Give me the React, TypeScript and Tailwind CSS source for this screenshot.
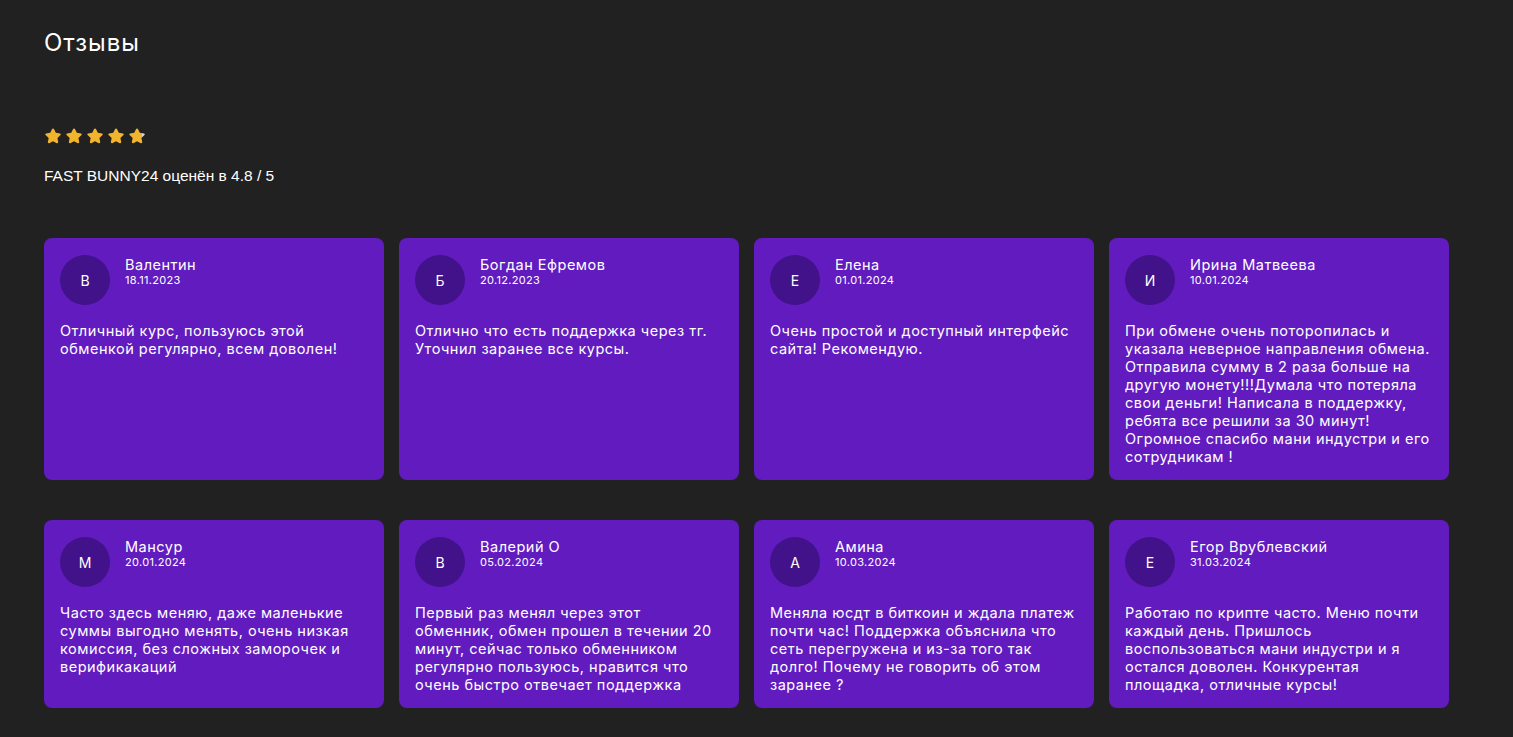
import React from "react";

type Review = {
  name: string;
  date: string;
  text: string;
};

const reviews: Review[] = [
  { name: "Валентин", date: "18.11.2023", text: "Отличный курс, пользуюсь этой обменкой регулярно, всем доволен!" },
  { name: "Богдан Ефремов", date: "20.12.2023", text: "Отлично что есть поддержка через тг. Уточнил заранее все курсы." },
  { name: "Елена", date: "01.01.2024", text: "Очень простой и доступный интерфейс сайта! Рекомендую." },
  {
    name: "Ирина Матвеева",
    date: "10.01.2024",
    text: "При обмене очень поторопилась и указала неверное направления обмена. Отправила сумму в 2 раза больше на другую монету!!!Думала что потеряла свои деньги! Написала в поддержку, ребята все решили за 30 минут! Огромное спасибо мани индустри и его сотрудникам !",
  },
  { name: "Мансур", date: "20.01.2024", text: "Часто здесь меняю, даже маленькие суммы выгодно менять, очень низкая комиссия, без сложных заморочек и верификакаций" },
  {
    name: "Валерий О",
    date: "05.02.2024",
    text: "Первый раз менял через этот обменник, обмен прошел в течении 20 минут, сейчас только обменником регулярно пользуюсь, нравится что очень быстро отвечает поддержка",
  },
  { name: "Амина", date: "10.03.2024", text: "Меняла юсдт в биткоин и ждала платеж почти час! Поддержка объяснила что сеть перегружена и из-за того так долго! Почему не говорить об этом заранее ?" },
  { name: "Егор Врублевский", date: "31.03.2024", text: "Работаю по крипте часто. Меню почти каждый день. Пришлось воспользоваться мани индустри и я остался доволен. Конкурентая площадка, отличные курсы!" },
];

const STAR = "M10 1.6c.5 0 .9.3 1.1.7l2 4.2 4.6.6c.9.1 1.3 1.3.6 1.9l-3.4 3.2.9 4.6c.2.9-.8 1.6-1.6 1.2L10 15.8 5.9 18c-.8.4-1.8-.3-1.6-1.2l.9-4.6-3.4-3.2c-.7-.6-.3-1.8.6-1.9l4.6-.6 2-4.2c.2-.4.6-.7 1-.7z";

function Star({ fill = 1, id }: { fill?: number; id: string }) {
  return (
    <svg width="18" height="18" viewBox="0 0 20 20">
      <defs>
        <linearGradient id={id} x1="0" x2="1" y1="0" y2="0">
          <stop offset={fill} stopColor="#f2b42c" />
          <stop offset={fill} stopColor="#d6d6d6" />
        </linearGradient>
      </defs>
      <path d={STAR} fill={`url(#${id})`} />
    </svg>
  );
}

function ReviewCard({ review }: { review: Review }) {
  return (
    <div className="rounded-lg bg-[#621bbf] px-4 pt-[17px] pb-[14px] text-white">
      <div className="flex items-start gap-[15px]">
        <div className="flex h-[50px] w-[50px] shrink-0 items-center justify-center rounded-full bg-[#42128a] text-[14px]">
          {review.name[0]}
        </div>
        <div className="pt-[1px]">
          <div className="text-[14.5px] leading-[17px] tracking-[0.5px]">{review.name}</div>
          <div className="text-[11px] leading-[14px] tracking-[0.3px]">{review.date}</div>
        </div>
      </div>
      <p className="mt-[17px] text-[14.5px] leading-[18px] tracking-[0.5px]">{review.text}</p>
    </div>
  );
}

export default function App() {
  return (
    <main className="min-h-screen bg-[#212121] px-[44px] pt-[28px] pb-8 text-white font-['Inter',sans-serif]">
      <h1 className="text-[24px] leading-[30px] font-normal tracking-[1px]">Отзывы</h1>

      <div className="mt-[69px] flex gap-[3px]">
        {[1, 1, 1, 1, 0.8].map((f, i) => (
          <Star key={i} fill={f} id={`star-${i}`} />
        ))}
      </div>
      <p className="mt-[22px] text-[15.5px] leading-[18px] font-['Liberation_Sans',sans-serif]">FAST BUNNY24 оценён в 4.8 / 5</p>

      <div className="mt-[53px] grid w-[1405px] grid-cols-4 gap-x-[15px] gap-y-[40px]">
        {reviews.map((r) => (
          <ReviewCard key={r.name} review={r} />
        ))}
      </div>
    </main>
  );
}
